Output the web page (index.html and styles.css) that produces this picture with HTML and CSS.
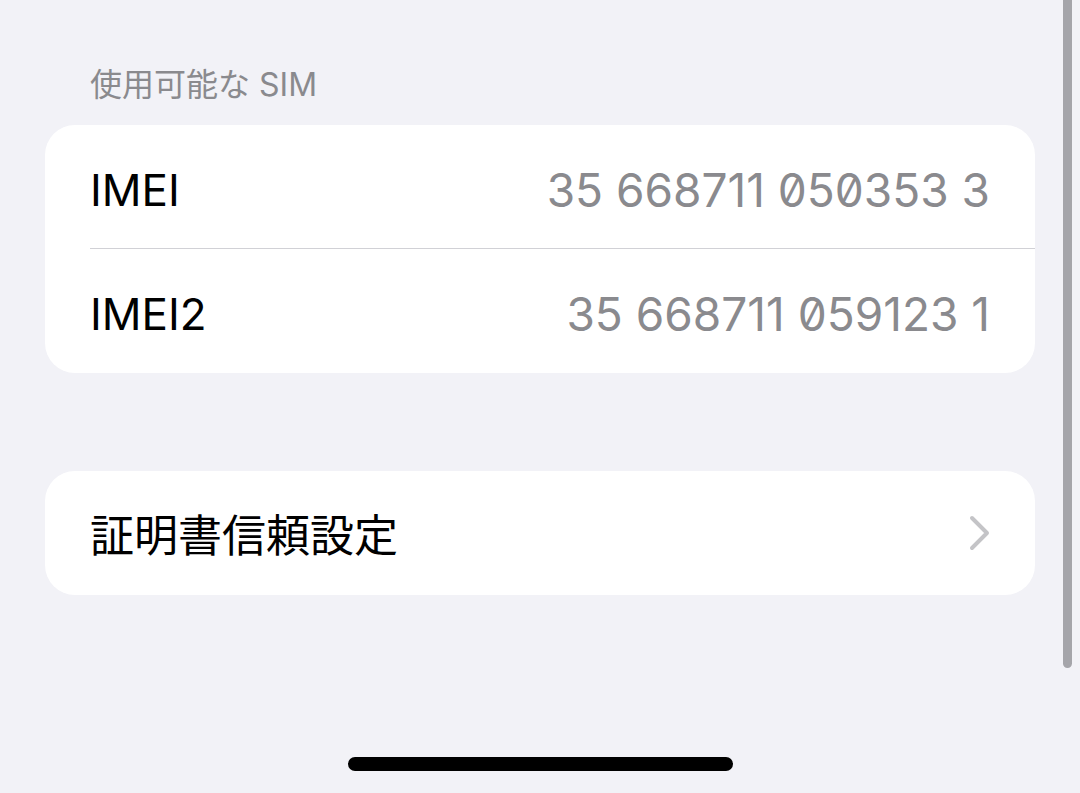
FILE: index.html
```html
<!DOCTYPE html>
<html lang="ja">
<head>
<meta charset="utf-8">
<title>情報</title>
<link rel="stylesheet" href="styles.css">
</head>
<body>
<div class="screen">
  <div class="section-header">使用可能な SIM</div>
  <div class="group">
    <div class="row row-sep">
      <span class="label">IMEI</span>
      <span class="value">35 668711 050353 3</span>
    </div>
    <div class="row">
      <span class="label">IMEI2</span>
      <span class="value">35 668711 059123 1</span>
    </div>
  </div>

  <div class="group group-spaced">
    <div class="row">
      <span class="label">証明書信頼設定</span>
      <svg class="chevron" width="24" height="36" viewBox="0 0 24 36" aria-hidden="true">
        <path d="M4 3 L19 18 L4 33" fill="none" stroke="#c4c4c7" stroke-width="4" stroke-linecap="round" stroke-linejoin="round"/>
      </svg>
    </div>
  </div>

  <div class="scrollbar"></div>
  <div class="home-indicator"></div>
</div>
</body>
</html>
```

FILE: styles.css
```css
html, body {
  margin: 0;
  padding: 0;
}

body {
  background: #f2f2f7;
  font-family: Inter, "Noto Sans CJK JP", sans-serif;
  color: #000;
}

.screen {
  position: relative;
  height: 793px;
  overflow: hidden;
  padding: 0 45px;
  box-sizing: border-box;
}

.section-header {
  padding: 63px 0 18px 45px;
  font-size: 32px;
  line-height: 44px;
  color: #8a8a8e;
}

.group {
  background: #fff;
  border-radius: 30px;
  overflow: hidden;
}

.group-spaced {
  margin-top: 98px;
}

.row {
  display: flex;
  align-items: center;
  justify-content: space-between;
  height: 124px;
  margin-left: 45px;
  padding-right: 45px;
  box-sizing: border-box;
}

.row-sep {
  height: 123px;
  border-bottom: 1px solid #d1d1d6;
  box-sizing: content-box;
}

.label {
  font-size: 44px;
  line-height: 1;
  padding-top: 6px;
}

.value {
  font-size: 46px;
  line-height: 1;
  padding-top: 6px;
  color: #8a8a8e;
  font-feature-settings: "zero" 1;
}

.chevron {
  display: block;
  margin-right: -2px;
}

.scrollbar {
  position: absolute;
  top: 0;
  right: 8px;
  width: 9px;
  height: 668px;
  border-radius: 0 0 5px 5px;
  background: #a5a5aa;
}

.home-indicator {
  position: absolute;
  left: 348px;
  top: 757px;
  width: 385px;
  height: 14px;
  border-radius: 7px;
  background: #000;
}
```
